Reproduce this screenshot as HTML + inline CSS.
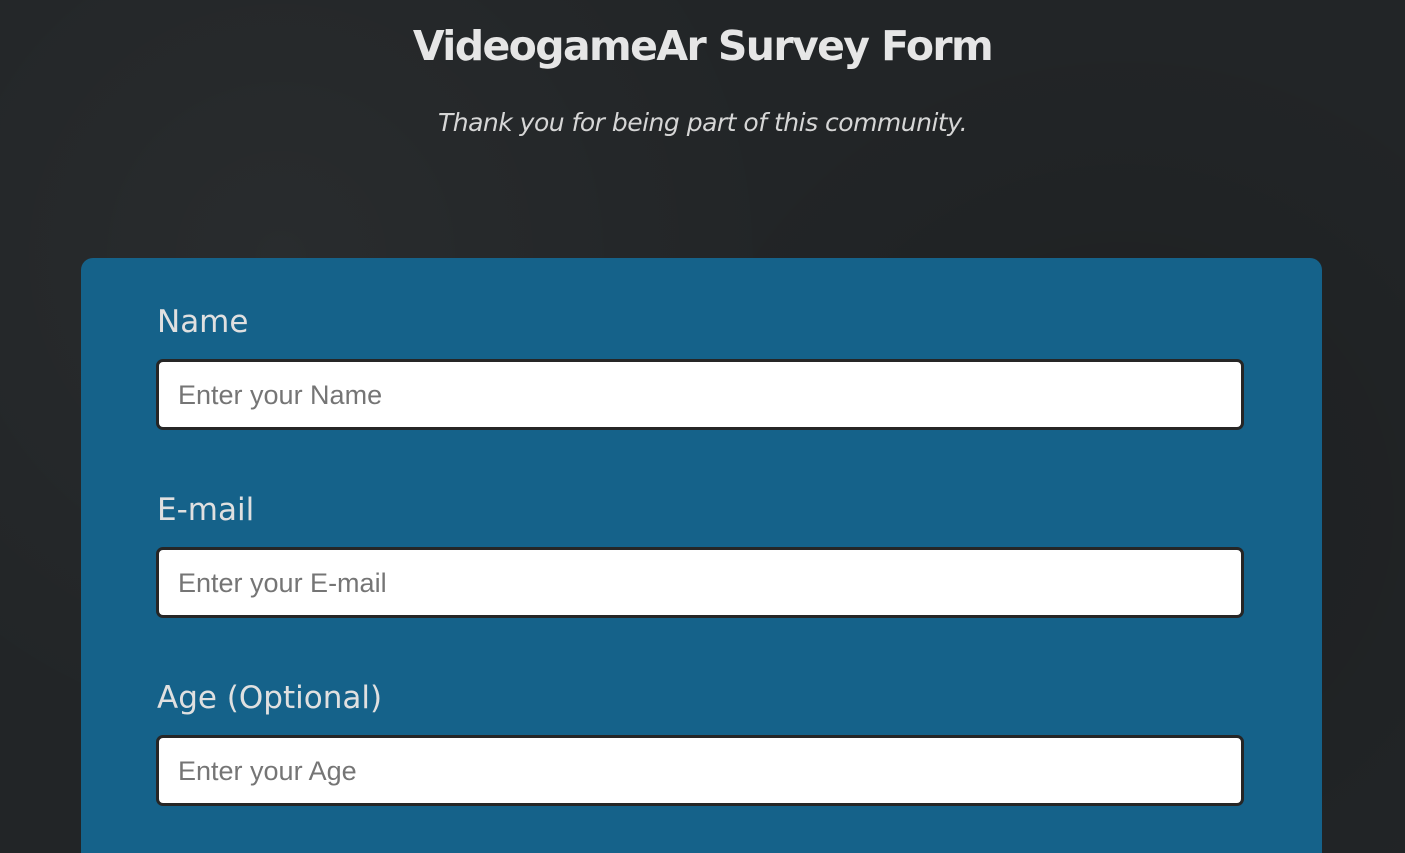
<!DOCTYPE html>
<html><head><meta charset="utf-8"><style>
html,body{margin:0;padding:0;width:1405px;height:853px;overflow:hidden;}
body{background:#222527;font-family:"DejaVu Sans","Liberation Sans",sans-serif;color:#e3e3e3;position:relative;
background-image:radial-gradient(circle at 20% 30%,rgba(255,255,255,0.03),transparent 40%),radial-gradient(circle at 80% 60%,rgba(0,0,0,0.15),transparent 40%);}
h1{margin:0;position:absolute;top:22px;left:0;width:1405px;text-align:center;font-size:41px;font-weight:bold;letter-spacing:-1.6px;color:#e6e6e6;}
.sub{position:absolute;top:108px;left:0;width:1405px;text-align:center;font-style:italic;font-size:25px;color:#d6d6d6;letter-spacing:-0.5px;}
.card{position:absolute;left:81px;top:258px;width:1241px;height:595px;background:#15628a;border-radius:12px 12px 0 0;}
label{position:absolute;left:76px;font-size:31px;color:#e0e0e0;}
.in{position:absolute;left:75px;width:1082px;height:65px;background:#fff;border:3px solid #262626;border-radius:7px;box-sizing:content-box;}
.in span{position:absolute;left:19px;top:18px;font-family:"Liberation Sans",sans-serif;font-size:27px;color:#757575;}
</style></head><body>
<h1>VideogameAr Survey Form</h1>
<div class="sub">Thank you for being part of this community.</div>
<div class="card">
<label style="top:46px">Name</label>
<div class="in" style="top:101px"><span>Enter your Name</span></div>
<label style="top:234px">E-mail</label>
<div class="in" style="top:289px"><span>Enter your E-mail</span></div>
<label style="top:422px">Age (Optional)</label>
<div class="in" style="top:477px"><span>Enter your Age</span></div>
</div>
</body></html>
